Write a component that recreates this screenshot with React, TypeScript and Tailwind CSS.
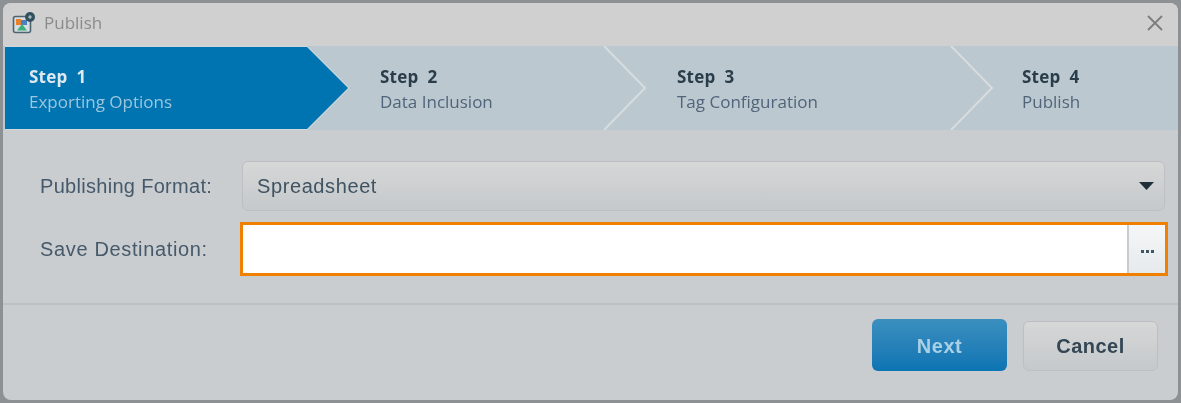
const sans = "[font-family:'Open_Sans',sans-serif]"
const arial = "[font-family:'Liberation_Sans',Arial,sans-serif]"

function AppIcon() {
  return (
    <svg width="24" height="24" viewBox="0 0 24 24" className="blur-[0.5px]">
      <rect x="1.5" y="5.5" width="17" height="16" rx="2" fill="#d5dde0" stroke="#4f6470" strokeWidth="1.6" />
      <rect x="4" y="8" width="5" height="6" fill="#e8812c" />
      <rect x="9" y="9" width="6" height="5" fill="#4a7fc0" />
      <path d="M5 19.5 L10 13 L15 19.5 Z" fill="#3fae7c" />
      <circle cx="18" cy="6" r="5" fill="#33505f" />
      <circle cx="18" cy="6" r="1.7" fill="#a8b8c0" />
    </svg>
  )
}

function Chevron() {
  return (
    <svg width="44" height="84" viewBox="0 0 44 84" className="absolute right-[-2px] top-0 blur-[0.4px]">
      <path d="M1 0 L42 42 L1 84" fill="none" stroke="#d7dcde" strokeWidth="2" />
    </svg>
  )
}

function Step({ num, title, className }: { num: string; title: string; className: string }) {
  return (
    <div className={`relative flex h-full flex-none flex-col justify-center pt-[1px] ${className}`}>
      <div className={`${sans} whitespace-pre text-[17px] font-bold leading-[25px] tracking-[0.2px] text-[#2a3d4a] blur-[0.6px]`}>{`Step  ${num}`}</div>
      <div className={`${sans} text-[17px] leading-[25px] text-[#50657a] blur-[0.6px]`}>{title}</div>
    </div>
  )
}

export default function App() {
  return (
    <div className="h-[403px] w-[1181px] overflow-hidden bg-[#8d9194] p-[3px]">
      <div className="flex h-full w-full flex-col overflow-hidden rounded-[8px] bg-[#c9cdd0]">
        {/* Title bar */}
        <div className="flex h-[43px] flex-none items-center justify-between bg-[#d0d0d0] pb-[3px] pl-[9px] pr-[14px]">
          <div className="flex items-center gap-[8px]">
            <AppIcon />
            <span className={`${sans} text-[17px] text-[#8b8b8b] blur-[0.6px]`}>Publish</span>
          </div>
          <svg width="18" height="18" viewBox="0 0 18 18" className="blur-[0.4px]">
            <path d="M2 2 L16 16 M16 2 L2 16" stroke="#7d7d7d" strokeWidth="1.8" />
          </svg>
        </div>

        {/* Stepper */}
        <div className="flex h-[84px] flex-none bg-[#bcc8cf] pl-[2px]">
          <div className="relative flex h-full w-[343px] flex-none flex-col justify-center pl-[24px] pt-[1px]">
            <svg width="345" height="84" viewBox="0 0 345 84" className="absolute left-0 top-0 blur-[0.4px]">
              <path d="M0 1 H302 L343 42 L302 83 H0 Z" fill="#0073b1" />
              <path d="M0 0.5 H302.5 L344 42 L302.5 83.5 H0" fill="none" stroke="#cfd8dc" strokeWidth="1" />
            </svg>
            <div className={`${sans} relative whitespace-pre text-[17px] font-bold leading-[25px] tracking-[0.2px] text-[#dfe8ee] blur-[0.6px]`}>{'Step  1'}</div>
            <div className={`${sans} relative text-[17px] leading-[25px] text-[#9cc6de] blur-[0.6px]`}>Exporting Options</div>
          </div>
          <Step num="2" title="Data Inclusion" className="w-[297px] pl-[32px]" />
          <div className="relative h-full w-0 flex-none"><Chevron /></div>
          <Step num="3" title="Tag Configuration" className="w-[347px] pl-[32px]" />
          <div className="relative h-full w-0 flex-none"><Chevron /></div>
          <Step num="4" title="Publish" className="flex-1 pl-[30px]" />
        </div>

        {/* Form */}
        <div className="flex flex-1 flex-col pl-[37px] pr-[10px] pt-[31px]">
          <div className="flex items-center pr-[3px]">
            <label className={`${arial} w-[202px] flex-none text-[20px] tracking-[0.3px] text-[#46596a] blur-[0.6px]`}>Publishing Format:</label>
            <div className="flex h-[50px] flex-1 items-center justify-between rounded-[6px] border border-[#bcc0c3] bg-gradient-to-b from-[#d6d7d7] to-[#c5c9cb] pl-[14px] pr-[10px]">
              <span className={`${arial} text-[20px] tracking-[0.6px] text-[#3f5362] blur-[0.6px]`}>Spreadsheet</span>
              <svg width="15" height="8" viewBox="0 0 15 8" className="blur-[0.4px]"><path d="M0 0 H15 L7.5 8 Z" fill="#1f2f3a" /></svg>
            </div>
          </div>
          <div className="mt-[11px] flex items-center">
            <label className={`${arial} w-[200px] flex-none text-[20px] tracking-[0.65px] text-[#46596a] blur-[0.6px]`}>Save Destination:</label>
            <div className="flex h-[54px] flex-1 border-[3px] border-[#f08000] bg-white">
              <div className="flex-1 rounded-l-[4px]" />
              <button className="flex w-[38px] flex-none items-center justify-center border-l-[2px] border-[#c9cccd] bg-gradient-to-b from-[#f5f6f7] to-[#e6eaec]">
                <span className="mt-[5px] flex gap-[2px]">
                  <i className="h-[3px] w-[3px] bg-[#3f5568]" />
                  <i className="h-[3px] w-[3px] bg-[#3f5568]" />
                  <i className="h-[3px] w-[3px] bg-[#3f5568]" />
                </span>
              </button>
            </div>
          </div>
        </div>

        {/* Footer */}
        <div className="flex h-[97px] flex-none items-start justify-end gap-[16px] border-t-2 border-[#bdc1c4] pr-[20px] pt-[14px]">
          <button className={`${arial} h-[52px] w-[135px] rounded-[6px] bg-gradient-to-b from-[#3a8fbf] to-[#0a74b2] pt-[2px] text-[20px] font-bold tracking-[0.5px] text-[#a9d0e5]`}>
            <span className="blur-[0.7px]">Next</span>
          </button>
          <button className={`${arial} mt-[2px] h-[50px] w-[135px] rounded-[6px] border border-[#bcc0c3] bg-gradient-to-b from-[#d6d7d7] to-[#c5c9cb] text-[20px] font-bold tracking-[0.5px] text-[#344654]`}>
            <span className="blur-[0.7px]">Cancel</span>
          </button>
        </div>
      </div>
    </div>
  )
}
